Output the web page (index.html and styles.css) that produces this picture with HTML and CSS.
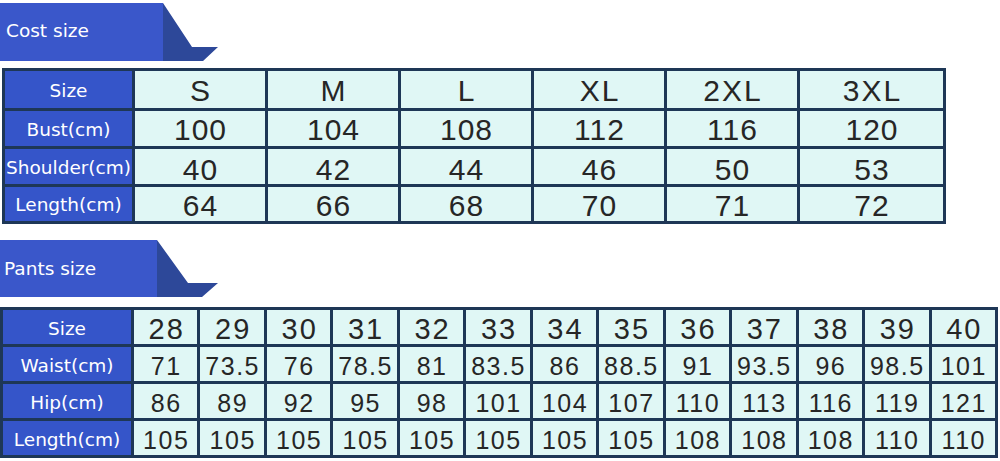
FILE: index.html
```html
<!DOCTYPE html>
<html lang="en">
<head>
<meta charset="utf-8">
<title>Size chart</title>
<link rel="stylesheet" href="styles.css">
</head>
<body>
<div class="banner banner-cost">
  <div class="banner-label">Cost size</div>
  <svg class="fold" width="56" height="58" viewBox="0 0 56 58"><polygon points="0,0 29,44 55,44 40,58 0,58" fill="#2d4899"/></svg>
</div>
<div class="grid cost">
  <div class="lab">Size</div><div class="hd">S</div><div class="hd">M</div><div class="hd">L</div><div class="hd">XL</div><div class="hd">2XL</div><div class="hd">3XL</div>
  <div class="lab">Bust(cm)</div><div class="v">100</div><div class="v">104</div><div class="v">108</div><div class="v">112</div><div class="v">116</div><div class="v">120</div>
  <div class="lab">Shoulder(cm)</div><div class="v low">40</div><div class="v low">42</div><div class="v low">44</div><div class="v low">46</div><div class="v low">50</div><div class="v low">53</div>
  <div class="lab">Length(cm)</div><div class="v">64</div><div class="v">66</div><div class="v">68</div><div class="v">70</div><div class="v">71</div><div class="v">72</div>
</div>
<div class="banner banner-pants">
  <div class="banner-label">Pants size</div>
  <svg class="fold" width="62" height="57" viewBox="0 0 62 57"><polygon points="0,0 31,43 61,43 45,57 0,57" fill="#2d4899"/></svg>
</div>
<div class="grid pants">
  <div class="lab">Size</div><div class="hd">28</div><div class="hd">29</div><div class="hd">30</div><div class="hd">31</div><div class="hd">32</div><div class="hd">33</div><div class="hd">34</div><div class="hd">35</div><div class="hd">36</div><div class="hd">37</div><div class="hd">38</div><div class="hd">39</div><div class="hd">40</div>
  <div class="lab">Waist(cm)</div><div class="v">71</div><div class="v">73.5</div><div class="v">76</div><div class="v">78.5</div><div class="v">81</div><div class="v">83.5</div><div class="v">86</div><div class="v">88.5</div><div class="v">91</div><div class="v">93.5</div><div class="v">96</div><div class="v">98.5</div><div class="v">101</div>
  <div class="lab">Hip(cm)</div><div class="v">86</div><div class="v">89</div><div class="v">92</div><div class="v">95</div><div class="v">98</div><div class="v">101</div><div class="v">104</div><div class="v">107</div><div class="v">110</div><div class="v">113</div><div class="v">116</div><div class="v">119</div><div class="v">121</div>
  <div class="lab">Length(cm)</div><div class="v">105</div><div class="v">105</div><div class="v">105</div><div class="v">105</div><div class="v">105</div><div class="v">105</div><div class="v">105</div><div class="v">105</div><div class="v">108</div><div class="v">108</div><div class="v">108</div><div class="v">110</div><div class="v">110</div>
</div>
</body>
</html>
```
FILE: styles.css
```css
html, body {
  margin: 0;
  padding: 0;
  background: #ffffff;
  width: 1000px;
  height: 461px;
  overflow: hidden;
}

.banner {
  display: flex;
  align-items: stretch;
}

.banner-label {
  background: #3a57ca;
  color: #ffffff;
  font-family: "DejaVu Sans", sans-serif;
  font-size: 18.5px;
  display: flex;
  align-items: center;
  padding-bottom: 3px;
  box-sizing: border-box;
}

.fold {
  display: block;
  flex: none;
}

.banner-cost {
  margin-top: 3px;
  height: 58px;
}

.banner-cost .banner-label {
  width: 163px;
  padding-left: 6px;
}

.banner-pants {
  margin-top: 16px;
  height: 57px;
}

.banner-pants .banner-label {
  width: 157px;
  padding-left: 4px;
  padding-top: 2px;
}

.grid {
  display: grid;
  background: #1e3756;
  padding: 3px;
  gap: 3px;
  box-sizing: border-box;
}

.cost {
  margin-top: 7px;
  margin-left: 2px;
  width: 944px;
  grid-template-columns: 127px repeat(5, 130px) 143px;
  grid-template-rows: 37px 35px 35px 34px;
}

.pants {
  margin-top: 10px;
  width: 998px;
  grid-template-columns: 128px repeat(13, 1fr);
  grid-template-rows: repeat(4, 34px);
}

.lab {
  background: #3555c9;
  color: #ffffff;
  font-family: "DejaVu Sans", sans-serif;
  font-size: 18.5px;
  display: flex;
  align-items: center;
  justify-content: center;
  white-space: nowrap;
  padding-top: 3px;
  line-height: 1;
}

.hd, .v {
  background: #e0f7f5;
  color: #262626;
  font-family: "Liberation Sans", Arial, sans-serif;
  display: flex;
  align-items: center;
  justify-content: center;
  white-space: nowrap;
  padding-top: 3px;
  line-height: 1;
  min-width: 0;
}

.hd {
  font-size: 30px;
  letter-spacing: 2px;
  padding-left: 2px;
}

.cost .v {
  font-size: 30px;
  letter-spacing: 1px;
  padding-left: 1px;
}

.cost .v.low {
  padding-top: 6px;
}

.pants .hd {
  font-size: 29px;
  padding-top: 4px;
}

.pants .v {
  font-size: 25px;
  letter-spacing: 1.5px;
  padding-left: 1px;
  padding-top: 5px;
}

.pants .lab {
  padding-top: 4px;
}
```
